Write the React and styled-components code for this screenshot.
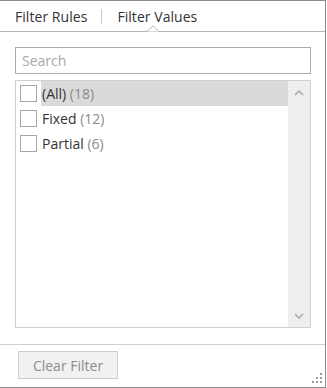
import React from "react";
import styled, { createGlobalStyle } from "styled-components";

const Global = createGlobalStyle`
  body {
    margin: 0;
    background: #ffffff;
    font-family: "Open Sans", "Noto Sans", sans-serif;
  }
`;

const items = [
  { label: "(All)", count: 18, active: true },
  { label: "Fixed", count: 12 },
  { label: "Partial", count: 6 }
];

export default function App() {
  return (
    <>
      <Global />
      <Popup>
        <Tabs>
          <Tab>Filter Rules</Tab>
          <Divider />
          <Tab selected>
            Filter Values
            <Notch width="12" height="7" viewBox="0 0 12 7">
              <path d="M0 6.5 L6 0.8 L12 6.5" fill="#fff" stroke="#b5b5b5" />
            </Notch>
          </Tab>
        </Tabs>
        <Body>
          <SearchBox placeholder="Search" />
          <ListBox>
            <Rows>
              {items.map(item => (
                <Row key={item.label}>
                  <Check />
                  <Label active={item.active}>
                    {item.label} <Count>({item.count})</Count>
                  </Label>
                </Row>
              ))}
            </Rows>
            <ScrollBar>
              <svg width="10" height="6" viewBox="0 0 10 6">
                <path d="M1 5 L5 1 L9 5" fill="none" stroke="#ababab" strokeWidth="1.6" />
              </svg>
              <svg width="10" height="6" viewBox="0 0 10 6">
                <path d="M1 1 L5 5 L9 1" fill="none" stroke="#ababab" strokeWidth="1.6" />
              </svg>
            </ScrollBar>
          </ListBox>
        </Body>
        <Footer>
          <ClearButton>Clear Filter</ClearButton>
          <Grip width="11" height="11" viewBox="0 0 11 11">
            <g fill="#9a9a9a">
              <rect x="8" y="0" width="2" height="2" />
              <rect x="4" y="4" width="2" height="2" />
              <rect x="8" y="4" width="2" height="2" />
              <rect x="0" y="8" width="2" height="2" />
              <rect x="4" y="8" width="2" height="2" />
              <rect x="8" y="8" width="2" height="2" />
            </g>
          </Grip>
        </Footer>
      </Popup>
    </>
  );
}

const Popup = styled.div`
  width: 325px;
  height: 386px;
  border-top: 1px solid #8a8a8a;
  border-right: 1px solid #8a8a8a;
  border-bottom: 1px solid #8a8a8a;
  display: flex;
  flex-direction: column;
  background: #fff;
  color: #333;
`;

const Tabs = styled.div`
  height: 30px;
  border-bottom: 1px solid #b5b5b5;
  display: flex;
  align-items: center;
  padding-left: 15px;
  flex-shrink: 0;
`;

const Tab = styled.div`
  position: relative;
  height: 30px;
  line-height: 31px;
  font-size: 14px;
  letter-spacing: 0.05px;
  color: #333;
`;

const Divider = styled.div`
  width: 1px;
  height: 15px;
  background: #c8c8c8;
  margin: 0 15px 0 14px;
`;

const Notch = styled.svg`
  position: absolute;
  left: 30px;
  bottom: -1px;
  display: block;
`;

const Body = styled.div`
  padding: 15px 14px 16px 15px;
  display: flex;
  flex-direction: column;
  gap: 6px;
`;

const SearchBox = styled.input`
  box-sizing: border-box;
  width: 296px;
  height: 27px;
  border: 1px solid #ababab;
  padding: 0 6px;
  font-family: inherit;
  font-size: 14px;
  color: #333;
  outline: none;
  &::placeholder {
    color: #a8a8a8;
  }
`;

const ListBox = styled.div`
  box-sizing: border-box;
  width: 296px;
  height: 248px;
  border: 1px solid #cfcfcf;
  display: flex;
`;

const Rows = styled.div`
  flex: 1;
  display: flex;
  flex-direction: column;
`;

const Row = styled.div`
  height: 25px;
  display: flex;
  align-items: center;
  padding-left: 4px;
`;

const Check = styled.span`
  box-sizing: border-box;
  width: 17px;
  height: 17px;
  border: 1px solid #a6a6a6;
  background: #fff;
  margin-right: 4px;
`;

const Label = styled.span`
  flex: 1;
  height: 25px;
  line-height: 26px;
  padding-left: 1px;
  font-size: 14px;
  color: #333;
  background: ${p => (p.active ? "#dadada" : "transparent")};
`;

const Count = styled.span`
  color: #8c8c8c;
`;

const ScrollBar = styled.div`
  width: 22px;
  background: #eeeeee;
  display: flex;
  flex-direction: column;
  justify-content: space-between;
  align-items: center;
  padding: 9px 0 8px;
`;

const Footer = styled.div`
  position: relative;
  flex: 1;
  border-top: 1px solid #cfcfcf;
  padding: 6px 0 0 18px;
`;

const ClearButton = styled.button`
  box-sizing: border-box;
  width: 100px;
  height: 28px;
  border: 1px solid #cdcdcd;
  background: #f1f1f1;
  color: #8c8c8c;
  font-family: inherit;
  font-size: 14px;
  padding: 0;
`;

const Grip = styled.svg`
  position: absolute;
  right: 2px;
  bottom: 3px;
  display: block;
`;
